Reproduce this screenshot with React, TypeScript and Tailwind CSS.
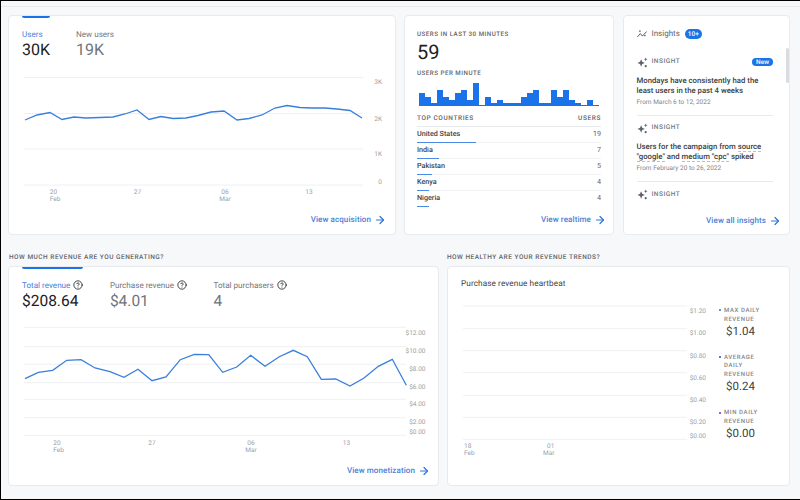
import { ArrowRight, CircleHelp } from 'lucide-react';

const usersLine =
  '25,120 37,115 50,112.5 62,119.5 74,117 86,118 100,117.5 113,117 125,114 137,110 149,119.5 161,116.5 173,118.5 186,118 198,115.5 211,112 224,111 237,120 249,118.5 262,115 275,108 287,105.5 300,107.5 312,108 325,108 337,109 350,110.5 362,118';

const revenueLine =
  '25,378.7 38.3,372.3 52.7,370.3 66.7,360.3 81,359.7 95,368 110,371.7 124,377.3 138,369.3 152,380.7 166,377 180.3,359.7 194.3,354.3 208.7,354.7 222.7,372.3 236.7,367 250.7,355.3 265,366.3 279.3,356.7 293.3,350.3 307.3,356.7 321.3,379.3 335.7,379 350,386 364,378 378.3,366.3 392.3,359.3 406.3,385.3';

const bars = [13, 9, 3, 16, 9, 6, 13, 16, 6, 23, 1, 9, 3, 6, 3, 3, 3, 9, 13, 16, 3, 3, 16, 9, 16, 6, 3, 1, 6, 1];

const countries = [
  { name: 'United States', users: 19, width: 59 },
  { name: 'India', users: 7, width: 22 },
  { name: 'Pakistan', users: 5, width: 15 },
  { name: 'Kenya', users: 4, width: 12 },
  { name: 'Nigeria', users: 4, width: 12 },
];

const ViewLink = ({ label }: { label: string }) => (
  <div className="flex h-[12px] items-center justify-end gap-[3px] text-[8px] font-medium tracking-[0.1px] text-[#4a80d8]">
    {label}
    <ArrowRight className="h-[12px] w-[12px] text-[#2f74d8]" strokeWidth={2.4} />
  </div>
);

const Metric = ({ label, value, active, help, small }: { label: string; value: string; active?: boolean; help?: boolean; small?: boolean }) => (
  <div>
    <div className={`flex h-[12px] items-center gap-[3px] text-[8.1px] ${active ? 'text-[#4a80d8]' : 'text-[#70757a]'}`}>
      {label}
      {help && <CircleHelp className="h-[10px] w-[10px] text-[#202124]" strokeWidth={2} />}
    </div>
    <div className={`h-[20px] leading-[20px] ${small ? 'text-[15.5px]' : 'text-[16px]'} ${active ? 'text-[#202124]' : 'text-[#70757a]'}`}>{value}</div>
  </div>
);

const SectionTitle = ({ children }: { children: string }) => (
  <div className="text-[6.5px] leading-[10px] font-medium tracking-[0.5px] text-[#5f6368] uppercase">{children}</div>
);

const Sparkle = () => (
  <svg viewBox="0 0 12 12" className="h-[11px] w-[11px] shrink-0" fill="#5f6368">
    <path d="M4.5 2.5 5.7 5.3 8.5 6.5 5.7 7.7 4.5 10.5 3.3 7.7 .5 6.5 3.3 5.3Z" />
    <path d="M9.5 .5 10.1 1.9 11.5 2.5 10.1 3.1 9.5 4.5 8.9 3.1 7.5 2.5 8.9 1.9Z" />
    <circle cx="9.5" cy="10" r="1.2" />
  </svg>
);

const InsightHead = ({ isNew }: { isNew?: boolean }) => (
  <div className="flex h-[12px] items-center gap-[4px]">
    <Sparkle />
    <span className="text-[6.5px] font-medium tracking-[0.5px] text-[#70757a]">INSIGHT</span>
    {isNew && (
      <span className="ml-auto rounded-full bg-[#1a73e8] px-[4px] text-[6.5px] leading-[8px] font-medium text-white">New</span>
    )}
  </div>
);

const axisText = 'fill-[#9aa0a6] text-[6.5px]';

const Legend = ({ dot, lines, value }: { dot: string; lines: string[]; value: string }) => (
  <div>
    {lines.map((line, i) => (
      <div key={line} className="flex h-[8.7px] items-center text-[6px] font-medium tracking-[0.6px] text-[#80868b]">
        <span className={`mr-[3px] h-[2px] w-[2px] rounded-full ${i === 0 ? dot : 'bg-transparent'}`} />
        {line}
      </div>
    ))}
    <div className="mt-[0.5px] ml-[7px] text-[11.5px] leading-[15px] text-[#3c4043]">{value}</div>
  </div>
);

export default function App() {
  return (
    <div className="h-[500px] w-[800px] overflow-hidden border-t border-b border-l border-black bg-[#f6f8fa] [font-family:Roboto,sans-serif] [text-rendering:geometricPrecision]">
      <div className="mt-[5px] border-t border-[#e8eaed] pt-[8px] pl-[7px]">
        <div className="flex gap-[8px]">
          {/* Acquisition */}
          <div className="h-[220px] w-[388px] shrink-0 rounded-[4px] border border-[#e8eaed] bg-white">
            <div className="ml-[13px] h-[2px] w-[28px] rounded-b-[2px] bg-[#1a73e8]" />
            <div className="mt-[10px] flex gap-[26px] pl-[13px]">
              <Metric label="Users" value="30K" active />
              <Metric label="New users" value="19K" />
            </div>
            <svg viewBox="9 70 387 135" className="mt-[10px] h-[135px] w-[387px]">
              {[77.5, 113.5, 149, 185].map((y) => (
                <line key={y} x1="24" x2="363" y1={y} y2={y} stroke="#eef0f2" strokeWidth="1" />
              ))}
              <polyline points={usersLine} fill="none" stroke="#3a7fdc" strokeWidth="1.3" />
              <g className={axisText} textAnchor="end">
                <text x="382" y="84">3K</text>
                <text x="382" y="120.5">2K</text>
                <text x="382" y="156">1K</text>
                <text x="382" y="184">0</text>
              </g>
              <g className={axisText} textAnchor="middle">
                <text x="53.5" y="194">20</text>
                <text x="55" y="201">Feb</text>
                <text x="137.5" y="194">27</text>
                <text x="225" y="194">06</text>
                <text x="225" y="201">Mar</text>
                <text x="309" y="194">13</text>
              </g>
            </svg>
            <div className="mt-[9px] pr-[9px]">
              <ViewLink label="View acquisition" />
            </div>
          </div>

          {/* Realtime */}
          <div className="h-[220px] w-[210px] shrink-0 rounded-[4px] border border-[#e8eaed] bg-white px-[12px]">
            <div className="mt-[13px] text-[6.2px] leading-[10px] font-medium tracking-[0.5px] text-[#5f6368]">USERS IN LAST 30 MINUTES</div>
            <div className="mt-[1.5px] text-[20px] leading-[22px] text-[#202124]">59</div>
            <div className="mt-[5.5px] text-[6.2px] leading-[10px] font-medium tracking-[0.5px] text-[#5f6368]">USERS PER MINUTE</div>
            <div className="mt-[4px] ml-[2px] flex h-[24px] items-end gap-[0.5px]">
              {bars.map((h, i) => (
                <div key={i} className="w-[5.5px] bg-[#1a73e8]" style={{ height: h }} />
              ))}
            </div>
            <div className="mt-[7px] flex justify-between text-[6.5px] leading-[10px] font-medium tracking-[0.6px] text-[#5f6368]">
              <span>TOP COUNTRIES</span>
              <span>USERS</span>
            </div>
            <div className="mt-[3px] border-t border-[#e8eaed]">
              {countries.map((c) => (
                <div key={c.name} className="h-[16px] border-b border-[#f1f3f4] last:border-b-0">
                  <div className="flex h-[14.5px] items-center justify-between text-[7.2px] font-medium text-[#3c4043]">
                    <span>{c.name}</span>
                    <span className="font-normal text-[#5f6368]">{c.users}</span>
                  </div>
                  <div className="h-[1px] bg-[#4a8ae6]" style={{ width: c.width }} />
                </div>
              ))}
            </div>
            <div className="mt-[7px] -mr-[5px]">
              <ViewLink label="View realtime" />
            </div>
          </div>

          {/* Insights */}
          <div className="relative ml-[1px] h-[220px] w-[167px] shrink-0 rounded-[4px] border border-[#e8eaed] bg-white pr-[16px] pl-[12.5px]">
            <div className="mt-[12px] flex h-[12px] items-center gap-[5px] text-[8px] text-[#5f6368]">
              <svg viewBox="0 0 12 12" className="h-[10px] w-[10px]" fill="none" stroke="#3c4043" strokeWidth="1">
                <path d="M.5 9.5 4 5.5 6.5 8.5 11.5 3" />
                <circle cx="3.5" cy="2.5" r=".5" />
                <circle cx="9.5" cy="8" r=".5" />
              </svg>
              Insights
              <span className="h-[10px] rounded-full bg-[#1a73e8] px-[3px] text-[6.5px] leading-[10px] font-medium text-white">10+</span>
            </div>
            <div className="mt-[16px]">
              <InsightHead isNew />
              <div className="mt-[7.5px] text-[7.75px] leading-[10.3px] font-medium text-[#3c4043]">
                Mondays have consistently had the least users in the past 4 weeks
              </div>
              <div className="mt-[0.5px] text-[6.5px] leading-[10px] text-[#80868b]">From March 6 to 12, 2022</div>
            </div>
            <div className="mt-[8px] border-t border-[#e8eaed] pt-[6.5px]">
              <InsightHead />
              <div className="mt-[7.5px] text-[7.75px] leading-[10.3px] font-medium text-[#3c4043]">
                Users for the campaign from <span className="border-b border-dashed border-[#bdc1c6]">source</span> <span className="border-b border-dashed border-[#bdc1c6]">"google"</span> and <span className="border-b border-dashed border-[#bdc1c6]">medium</span> <span className="border-b border-dashed border-[#bdc1c6]">"cpc"</span> spiked
              </div>
              <div className="mt-[0.5px] text-[6.5px] leading-[10px] text-[#80868b]">From February 20 to 26, 2022</div>
            </div>
            <div className="mt-[8px] border-t border-[#e8eaed] pt-[7px]">
              <InsightHead />
            </div>
            <div className="mt-[14.5px] -mr-[8px]">
              <ViewLink label="View all insights" />
            </div>
            <div className="absolute top-[32px] right-[0.5px] h-[35px] w-[3px] rounded-full bg-[#dadce0]" />
          </div>
        </div>

        <div className="mt-[17px] flex gap-[8px]">
          {/* Monetization */}
          <div className="w-[431px] shrink-0">
            <div className="pl-[1px]">
              <SectionTitle>How much revenue are you generating?</SectionTitle>
            </div>
            <div className="mt-[4px] h-[220px] rounded-[4px] border border-[#e8eaed] bg-white">
              <div className="ml-[13px] h-[2px] w-[61px] rounded-b-[2px] bg-[#1a73e8]" />
              <div className="mt-[10px] flex gap-[26.5px] pl-[13px]">
                <Metric label="Total revenue" value="$208.64" active help small />
                <Metric label="Purchase revenue" value="$4.01" help small />
                <Metric label="Total purchasers" value="4" help small />
              </div>
              <svg viewBox="9 321 430 135" className="mt-[10px] h-[135px] w-[430px]">
                {[327.3, 346.7, 364.3, 382.7, 399.3, 417.7, 435.3].map((y) => (
                  <line key={y} x1="24" x2="406" y1={y} y2={y} stroke="#eef0f2" strokeWidth="1" />
                ))}
                <polyline points={revenueLine} fill="none" stroke="#3a7fdc" strokeWidth="1.3" />
                <g className={axisText} textAnchor="end">
                  <text x="425.5" y="334.5">$12.00</text>
                  <text x="425.5" y="352.5">$10.00</text>
                  <text x="425.5" y="370.5">$8.00</text>
                  <text x="425.5" y="388.5">$6.00</text>
                  <text x="425.5" y="406">$4.00</text>
                  <text x="425.5" y="424">$2.00</text>
                  <text x="425.5" y="434">$0.00</text>
                </g>
                <g className={axisText} textAnchor="middle">
                  <text x="57" y="444.5">20</text>
                  <text x="58.5" y="451.5">Feb</text>
                  <text x="152" y="444.5">27</text>
                  <text x="251" y="444.5">06</text>
                  <text x="251" y="451.5">Mar</text>
                  <text x="346.5" y="444.5">13</text>
                </g>
              </svg>
              <div className="mt-[9px] pr-[8px]">
                <ViewLink label="View monetization" />
              </div>
            </div>
          </div>

          {/* Heartbeat */}
          <div className="w-[343px] shrink-0">
            <SectionTitle>How healthy are your revenue trends?</SectionTitle>
            <div className="mt-[4px] flex h-[220px] rounded-[4px] border border-[#e8eaed] bg-white">
              <div className="w-[270px] shrink-0">
                <div className="mt-[11px] pl-[13px] text-[8.2px] leading-[12px] tracking-[0.1px] text-[#3c4043]">Purchase revenue heartbeat</div>
                <svg viewBox="448 300 270 160" className="mt-[10px] h-[160px] w-[270px]">
                  {[306, 328.7, 350.7, 372.7, 395.3, 417.3, 439.3].map((y) => (
                    <line key={y} x1="463" x2="687" y1={y} y2={y} stroke="#eef0f2" strokeWidth="1" />
                  ))}
                  <g className={axisText} textAnchor="end">
                    <text x="706" y="313">$1.20</text>
                    <text x="706" y="335">$1.00</text>
                    <text x="706" y="357.5">$0.80</text>
                    <text x="706" y="379.5">$0.60</text>
                    <text x="706" y="402">$0.40</text>
                    <text x="706" y="424">$0.20</text>
                    <text x="706" y="437.5">$0.00</text>
                  </g>
                  <g className={axisText}>
                    <text x="464" y="447.5">18</text>
                    <text x="464" y="455">Feb</text>
                    <text x="547" y="447.5">01</text>
                    <text x="543" y="455">Mar</text>
                  </g>
                </svg>
              </div>
              <div className="mt-[39px] ml-[1px] flex flex-col gap-[14px]">
                <Legend dot="bg-[#1a73e8]" lines={['MAX DAILY', 'REVENUE']} value="$1.04" />
                <Legend dot="bg-[#3b3be0]" lines={['AVERAGE', 'DAILY', 'REVENUE']} value="$0.24" />
                <Legend dot="bg-[#6a2ee0]" lines={['MIN DAILY', 'REVENUE']} value="$0.00" />
              </div>
            </div>
          </div>
        </div>
      </div>
    </div>
  );
}
